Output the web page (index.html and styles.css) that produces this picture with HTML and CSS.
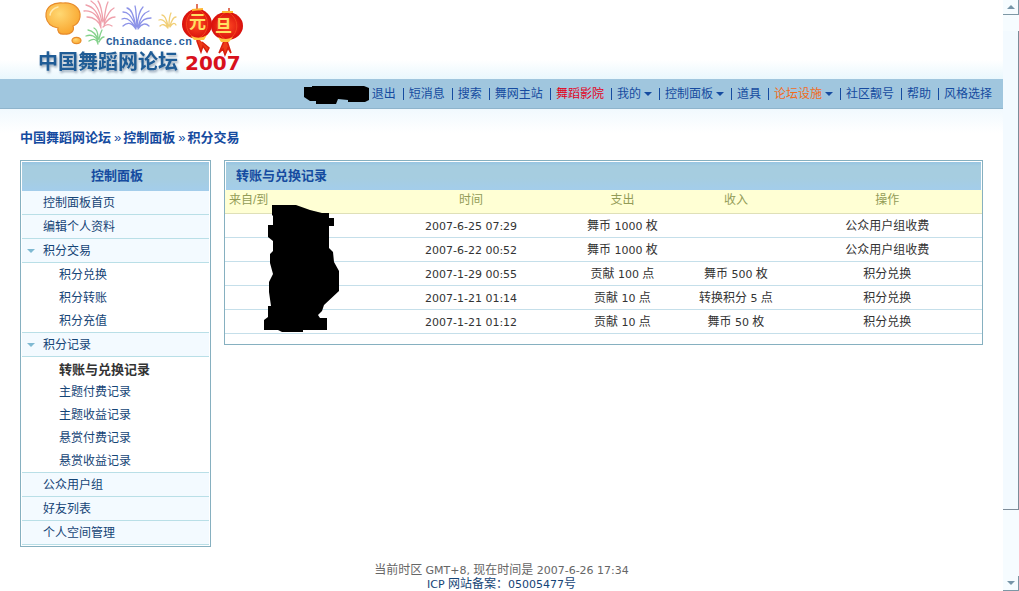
FILE: index.html
```html
<!DOCTYPE html>
<html lang="zh-CN">
<head>
  <meta charset="UTF-8" />
  <meta name="viewport" content="width=device-width, initial-scale=1.0"/>
  <title>积分交易 - 中国舞蹈网论坛</title>
  <link rel="stylesheet" href="styles.css">
</head>
<body>

  <div class="page">
    <header class="header">
      <a href="#" aria-label="中国舞蹈网论坛">
        <svg class="logo" width="250" height="79" viewBox="0 0 250 79">
          <defs>
            <radialGradient id="gold" cx="40%" cy="35%" r="70%">
              <stop offset="0" stop-color="#ffd873"/>
              <stop offset="1" stop-color="#f9a42c"/>
            </radialGradient>
            <radialGradient id="lantern">
              <stop offset="0" stop-color="#ff4a22"/>
              <stop offset="1" stop-color="#d80f0c"/>
            </radialGradient>
          </defs>
          <!-- speech bubble -->
          <g fill="url(#gold)" stroke="#e78b2b" stroke-width="1.2">
            <path d="M46 17C45 6 54 2 63 3C73 2 81 8 80 17C79 23 76 25 73 26C75 31 70 35 65 34C59 35 57 31 58 28C51 27 47 23 46 17Z"/>
            <ellipse cx="76.500" cy="40.500" rx="4.500" ry="3.200"/>
          </g>
          <path d="M50 15C51 10 54 8 58 7" fill="none" stroke="#ffe9ae" stroke-width="1.500" stroke-linecap="round"/>
          <!-- fireworks -->
          <g fill="none" stroke-linecap="round" stroke-width="1.300">
            <path stroke="#efa0ab" d="M101 28C100 22 94 17 87 17M101 26C99 17 93 10 84 11M101 24C98 13 94 7 86 5M102 22C100 11 96 4 91 1M103 21C102 11 101 5 98 1M104 21C105 12 106 6 108 2M104 23C107 15 110 10 114 8M104 25C107 20 111 17 115 17M103 27C106 24 109 24 112 26"/>
            <path stroke="#8d93e8" d="M136 29C131 22 127 22 123 26M136 28C130 19 126 17 122 19M136 27C131 14 127 12 123 12M136 27C133 13 131 9 127 8M137 27C136 13 136 9 135 6M137 27C138 14 140 10 143 7M138 27C141 16 144 13 149 11M138 28C142 19 146 18 151 18M138 29C142 23 146 23 149 26"/>
            <path stroke="#f1cf77" d="M168 28C165 24 162 24 160 26M168 27C165 20 162 19 159 20M168 26C166 17 164 15 162 15M169 26C169 17 170 15 171 13M170 26C172 19 174 17 176 17M170 27C173 22 175 23 176 25"/>
            <path stroke="#83d18b" d="M98 44C97 39 93 38 89 41M98 42C96 36 91 34 86 36M98 40C96 34 93 31 88 30M98 38C98 33 96 29 94 28M99 39C100 34 101 32 102 30M99 42C101 38 102 37 104 37"/>
          </g>
          <!-- lanterns -->
          <g>
            <path d="M197 4V12M229 8V14" stroke="#d8462a" stroke-width="1.500"/>
            <path d="M197 37V41L201 52L203 46L207 52L209 48L202 42M224 37V41L219 53L223 49L225 55L228 48L231 53L227 41" fill="#ee3c18" stroke="#d9200f" stroke-width="1.500"/>
            <ellipse cx="197" cy="24" rx="15" ry="15" fill="url(#lantern)"/>
            <ellipse cx="227" cy="26" rx="16" ry="14" fill="url(#lantern)"/>
            <path d="M197 9C183 14 183 34 197 39M197 9C211 14 211 34 197 39M227 12C214 17 214 35 227 40M227 12C240 17 240 35 227 40" fill="none" stroke="#f4431f"/>
            <path d="M191 36Q200 40 207 35L204 40H194ZM218 37Q225 41 233 37L229 42H221Z" fill="#ffc442"/>
            <path d="M192 10L203 9M222 12H233" stroke="#ffb52f" stroke-width="2"/>
          </g>
          <text class="logo-lantern" x="189" y="28">元</text>
          <text class="logo-lantern" x="215" y="32">旦</text>
          <text class="logo-domain" x="106" y="45">Chinadance.cn</text>
          <text class="logo-name" x="38" y="69">中国舞蹈网论坛</text>
          <text class="logo-year" x="185" y="70">2007</text>
        </svg>
      </a>
    </header>

    <nav class="menu">
      <svg class="menu-user" width="66" height="22" viewBox="0 0 66 22"><path d="M0 4H8V3H60L65 5V17L61 19H44V17L34 16L32 21H12V18H6L0 14Z"/></svg>
      <ul>
        <li><a href="#">退出</a></li>
        <li><a href="#">短消息</a></li>
        <li><a href="#">搜索</a></li>
        <li><a href="#">舞网主站</a></li>
        <li><a href="#" class="hot">舞蹈影院</a></li>
        <li><a href="#" class="drop">我的</a></li>
        <li><a href="#" class="drop">控制面板</a></li>
        <li><a href="#">道具</a></li>
        <li><a href="#" class="drop"><span class="orange">论坛设施</span></a></li>
        <li><a href="#">社区靓号</a></li>
        <li><a href="#">帮助</a></li>
        <li><a href="#">风格选择</a></li>
      </ul>
    </nav>

    <div class="breadcrumb">
      <a href="#">中国舞蹈网论坛</a><span>»</span><a href="#">控制面板</a><span>»</span><a href="#">积分交易</a>
    </div>

    <div class="columns">
      <aside class="sidebar">
        <h2>控制面板</h2>
        <ul>
          <li><a href="#">控制面板首页</a></li>
          <li><a href="#">编辑个人资料</a></li>
          <li><a href="#" class="open">积分交易</a>
            <ul>
              <li><a href="#">积分兑换</a></li>
              <li><a href="#">积分转账</a></li>
              <li><a href="#">积分充值</a></li>
            </ul>
          </li>
          <li><a href="#" class="open">积分记录</a>
            <ul>
              <li><a href="#" class="current">转账与兑换记录</a></li>
              <li><a href="#">主题付费记录</a></li>
              <li><a href="#">主题收益记录</a></li>
              <li><a href="#">悬赏付费记录</a></li>
              <li><a href="#">悬赏收益记录</a></li>
            </ul>
          </li>
          <li><a href="#">公众用户组</a></li>
          <li><a href="#">好友列表</a></li>
          <li><a href="#">个人空间管理</a></li>
        </ul>
      </aside>

      <main class="content">
        <h1>转账与兑换记录</h1>
        <table>
          <thead>
            <tr>
              <th class="from">来自/到</th>
              <th class="time">时间</th>
              <th class="amount">支出</th>
              <th class="amount">收入</th>
              <th>操作</th>
            </tr>
          </thead>
          <tbody>
            <tr><td></td><td class="num">2007-6-25 07:29</td><td>舞币 <span class="num">1000</span> 枚</td><td></td><td>公众用户组收费</td></tr>
            <tr><td></td><td class="num">2007-6-22 00:52</td><td>舞币 <span class="num">1000</span> 枚</td><td></td><td>公众用户组收费</td></tr>
            <tr><td></td><td class="num">2007-1-29 00:55</td><td>贡献 <span class="num">100</span> 点</td><td>舞币 <span class="num">500</span> 枚</td><td>积分兑换</td></tr>
            <tr><td></td><td class="num">2007-1-21 01:14</td><td>贡献 <span class="num">10</span> 点</td><td>转换积分 <span class="num">5</span> 点</td><td>积分兑换</td></tr>
            <tr><td></td><td class="num">2007-1-21 01:12</td><td>贡献 <span class="num">10</span> 点</td><td>舞币 <span class="num">50</span> 枚</td><td>积分兑换</td></tr>
          </tbody>
        </table>
        <!-- hidden user names -->
        <svg class="names" width="76" height="128" viewBox="0 0 76 128"><path d="M8 0H32L46 5L58 8H65V13H70V21H65V43L69 47L70 57L75 66V86L60 100L58 106L54 110L56 113H63V125H39V127H18L14 125H0V115L4 112V101H7L5 87V77L9 69L6 58V49L9 46V36L4 32V20H9V11L8 10Z"/></svg>
      </main>
    </div>

    <footer class="footer">
      <p>当前时区 <span class="num">GMT+8,</span> 现在时间是 <span class="num">2007-6-26 17:34</span></p>
      <p><a href="#"><span class="num">ICP</span> 网站备案：<span class="num">05005477</span>号</a></p>
    </footer>
  </div>

  <div class="scrollbar" aria-hidden="true">
    <span class="arrow up"></span>
    <span class="thumb"></span>
    <span class="arrow down"></span>
  </div>

</body>
</html>
```
FILE: styles.css
```css
* {
  box-sizing: border-box;
}
body {
  display: flex;
  min-height: 100vh;
  margin: 0;
  font: 12px/14px "Liberation Sans", "Noto Sans CJK SC", sans-serif;
  color: #333;
  background: #fff;
}
a {
  color: #154476;
  text-decoration: none;
}
a:hover {
  text-decoration: underline;
}
ul {
  list-style: none;
  margin: 0;
  padding: 0;
}
.page {
  flex: 1;
  min-width: 0;
}
.num {
  font-family: "DejaVu Sans", sans-serif;
  font-size: 11px;
  line-height: 11px;
}

/* header */
.header {
  height: 79px;
  background: linear-gradient(#fff 60px, #e9f7fd);
}
.logo {
  display: block;
}
.logo-name {
  font: bold 20px "Noto Sans CJK SC", sans-serif;
  fill: #1f5c96;
  filter: drop-shadow(1px 2px 1px #9ab);
}
.logo-domain {
  font: bold 11px "Liberation Mono", monospace;
  fill: #2b5f9c;
}
.logo-year {
  font: bold 20px "DejaVu Sans", sans-serif;
  fill: #d8111c;
}
.logo-lantern {
  font: bold 17px "Noto Sans CJK SC", sans-serif;
  fill: #ffe063;
}

/* top menu */
.menu {
  display: flex;
  justify-content: flex-end;
  align-items: center;
  height: 30px;
  padding-right: 4px;
  background: #a0c6de;
  border-bottom: 1px solid #8fb4cc;
}
.menu-user {
  margin-right: -4px;
}
.menu ul {
  display: flex;
}
.menu li {
  display: flex;
  align-items: center;
  padding: 0 7px 0 6px;
}
.menu li + li::before {
  content: "";
  width: 1px;
  height: 12px;
  margin-left: -6px;
  margin-right: 5px;
  background: #154ba0;
}
.menu a {
  color: #154ba0;
}
.menu .hot {
  color: #e3001b;
}
.menu .orange {
  color: #f26c1c;
}
.menu .drop {
  display: flex;
  align-items: center;
}
.menu .drop::after {
  content: "";
  margin-left: 3px;
  border: 4px solid transparent;
  border-top-color: #154ba0;
  border-bottom: 0;
}

.breadcrumb {
  padding: 21px 20px 15px;
  font-size: 13px;
  line-height: 15px;
  font-weight: bold;
  color: #154ba0;
  background: linear-gradient(#f1f9fe, #fff 24px);
}
.breadcrumb a {
  color: #154ba0;
}
.breadcrumb span {
  padding: 0 2px 0 3px;
  font-weight: normal;
}

/* boxes */
.columns {
  display: flex;
  align-items: flex-start;
  gap: 13px;
  padding: 0 20px;
}
.sidebar, .content {
  border: 1px solid #86b0c0;
  background: #fff;
}
h1, h2 {
  margin: 1px 1px 0;
  height: 28px;
  font-size: 13px;
  line-height: 27px;
  color: #154ba0;
  background: linear-gradient(#96c4e2, #a6cde0 4px, #a6cde0 16px, #a3cdeb);
}
.sidebar {
  width: 191px;
  padding-bottom: 1px;
}
.sidebar h2 {
  height: 29px;
  padding-left: 3px;
  text-align: center;
}
.sidebar > ul {
  margin: 0 1px;
}
.sidebar > ul > li {
  border-bottom: 1px solid #b9dfe7;
}
.sidebar > ul > li > a {
  display: flex;
  align-items: center;
  height: 23px;
  padding-top: 1px;
  padding-left: 21px;
  background: #f3faff;
}
.sidebar > ul > li > .open {
  padding-left: 5px;
}
.sidebar .open::before {
  content: "";
  margin-right: 8px;
  border: 4px solid transparent;
  border-top-color: #7fb9d2;
  border-bottom: 0;
}
.sidebar ul ul {
  border-top: 1px solid #b9dfe7;
}
.sidebar ul ul a {
  display: block;
  padding-top: 2px;
  padding-left: 37px;
  line-height: 21px;
}
.sidebar .current {
  font-size: 13px;
  font-weight: bold;
  color: #333;
}

.content {
  position: relative;
  flex: 1;
  padding-bottom: 10px;
}
.content h1 {
  padding-left: 10px;
}
table {
  width: 100%;
  table-layout: fixed;
  border-spacing: 0;
}
th, td {
  height: 24px;
  padding: 1px 4px 0;
  text-align: center;
  border-bottom: 1px solid #c5dfea;
}
th {
  padding: 0 4px 3px;
  font-weight: normal;
  color: #939c57;
  background: #ffffd4;
  border-color: #dfe0b8;
}
.from {
  width: 20%;
  text-align: left;
}
.time {
  width: 25%;
}
.amount {
  width: 15%;
}
.names {
  position: absolute;
  left: 39px;
  top: 44px;
}

.footer {
  margin-top: 16px;
  text-align: center;
  color: #666;
}
.footer p {
  margin: 0;
}

/* window scrollbar */
.scrollbar {
  display: flex;
  flex-direction: column;
  width: 16px;
  background: #f6fcff;
}
.arrow {
  display: flex;
  align-items: center;
  justify-content: center;
  height: 15px;
  border-right: 1px solid #7d97a5;
  border-bottom: 1px solid #7d97a5;
}
.arrow::before {
  content: "";
  border: 4px solid transparent;
}
.up::before {
  border-top: 0;
  border-bottom-color: #7795a8;
}
.down::before {
  border-bottom: 0;
  border-top-color: #7795a8;
}
.thumb {
  flex: 1;
  margin: 16px 0 66px;
  background: #f3faff;
  border-right: 1px solid #7d8c99;
  border-bottom: 1px solid #7d8c99;
}
```
